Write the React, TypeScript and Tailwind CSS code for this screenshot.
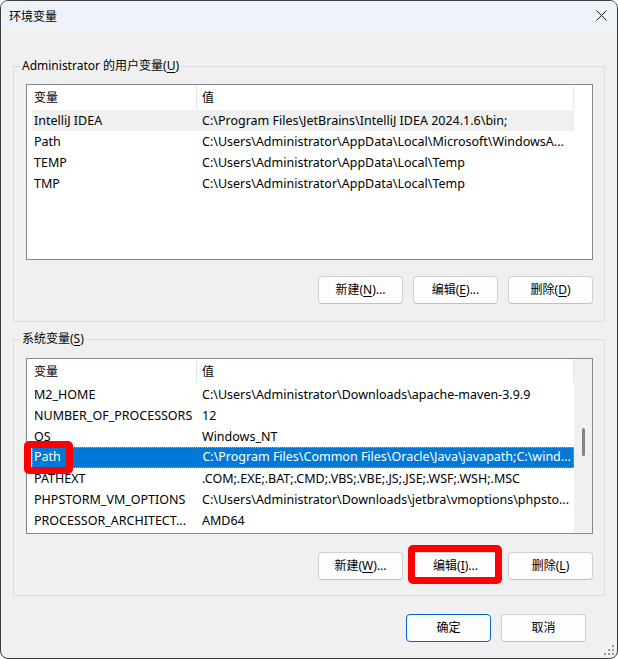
import React from 'react';

type Row = { name: string; value: string };

const userVars: Row[] = [
  { name: 'IntelliJ IDEA', value: 'C:\\Program Files\\JetBrains\\IntelliJ IDEA 2024.1.6\\bin;' },
  { name: 'Path', value: 'C:\\Users\\Administrator\\AppData\\Local\\Microsoft\\WindowsA...' },
  { name: 'TEMP', value: 'C:\\Users\\Administrator\\AppData\\Local\\Temp' },
  { name: 'TMP', value: 'C:\\Users\\Administrator\\AppData\\Local\\Temp' },
];

const sysVars: Row[] = [
  { name: 'M2_HOME', value: 'C:\\Users\\Administrator\\Downloads\\apache-maven-3.9.9' },
  { name: 'NUMBER_OF_PROCESSORS', value: '12' },
  { name: 'OS', value: 'Windows_NT' },
  { name: 'Path', value: 'C:\\Program Files\\Common Files\\Oracle\\Java\\javapath;C:\\wind...' },
  { name: 'PATHEXT', value: '.COM;.EXE;.BAT;.CMD;.VBS;.VBE;.JS;.JSE;.WSF;.WSH;.MSC' },
  { name: 'PHPSTORM_VM_OPTIONS', value: 'C:\\Users\\Administrator\\Downloads\\jetbra\\vmoptions\\phpsto...' },
  { name: 'PROCESSOR_ARCHITECT...', value: 'AMD64' },
];

function Btn({ label, hot, suffix = '', primary = false }: { label: string; hot?: string; suffix?: string; primary?: boolean }) {
  return (
    <button
      className={`w-[85px] h-[28px] rounded-[4px] border bg-[#fdfdfd] text-[12px] text-black flex items-center justify-center ${
        primary ? 'border-[#0067c0]' : 'border-[#d0d0d0] border-b-[#c0c0c0]'
      }`}
    >
      {label}
      {hot && (
        <>
          (<span className="underline underline-offset-2">{hot}</span>)
        </>
      )}
      {suffix}
    </button>
  );
}

function VarList({ rows, active, selected, scroll }: { rows: Row[]; active?: number; selected?: number; scroll?: boolean }) {
  return (
    <div className="h-[176px] border border-[#828790] bg-white flex">
      <div className="flex-1 pl-[5px]">
        {/* header */}
        <div className="h-[25px] flex text-[12px] text-black">
          <div className="w-[165px] pl-[2px] flex items-center border-r border-[#e5e5e5] my-[1px]">变量</div>
          <div className="w-[377px] pl-[5px] flex items-center border-r border-[#e5e5e5] my-[1px]">值</div>
        </div>
        {rows.map((r, i) => {
          const isSel = i === selected;
          const isActive = i === active;
          return (
            <div
              key={r.name + i}
              className={`h-[21px] w-[542px] flex text-[12.5px] whitespace-nowrap ${
                isSel
                  ? 'bg-[#0078d7] text-white border border-dotted border-[#e89a3c]'
                  : isActive
                  ? 'bg-[#f0f0f0] text-black'
                  : 'text-black'
              }`}
            >
              <div className={`w-[165px] flex items-center overflow-hidden ${isSel ? 'pl-[1px]' : 'pl-[2px] pt-[1px]'}`}>{r.name}</div>
              <div className={`w-[377px] pl-[5px] flex items-center overflow-hidden ${isSel ? '' : 'pt-[1px]'}`}>{r.value}</div>
            </div>
          );
        })}
      </div>
      {/* scrollbar area */}
      <div className={`w-[18px] relative ${scroll ? 'bg-[#f0f0f0]' : ''}`}>
        {scroll && <div className="absolute left-[8px] top-[69px] w-[3px] h-[28px] rounded-full bg-[#858585]" />}
      </div>
    </div>
  );
}

export default function App() {
  return (
    <div className="relative w-[618px] h-[659px] rounded-[8px] border border-[#3a3a3a] overflow-hidden bg-[#f0f0f0] flex flex-col font-['Noto_Sans','Noto_Sans_CJK_SC',sans-serif] text-[12px] text-black">
      {/* Title bar */}
      <div className="h-[29px] bg-[#eef2f9] flex items-center justify-between pl-[8px] pr-[9px] shrink-0">
        <span className="text-[12px] font-['Noto_Sans_CJK_SC',sans-serif]">环境变量</span>
        <svg width="11" height="11" viewBox="0 0 11 11" className="mr-[1px]">
          <path d="M0.5 0.5 L10.5 10.5 M10.5 0.5 L0.5 10.5" stroke="#1a1a1a" strokeWidth="1" fill="none" />
        </svg>
      </div>

      <div className="px-[12px] flex flex-col">
        {/* User variables */}
        <fieldset className="mt-[28px] border border-[#dcdcdc] p-0 m-0">
          <legend className="ml-[6px] px-[2px] leading-[16px] text-[12px]">
            Administrator 的用户变量(<span className="underline underline-offset-2">U</span>)
          </legend>
          <div className="pt-[10px] pl-[12px] pr-[11px] pb-[17px]">
            <VarList rows={userVars} active={0} />
            <div className="mt-[16px] flex justify-end gap-[10px]">
              <Btn label="新建" hot="N" suffix="..." />
              <Btn label="编辑" hot="E" suffix="..." />
              <Btn label="删除" hot="D" />
            </div>
          </div>
        </fieldset>

        {/* System variables */}
        <fieldset className="mt-[9px] border border-[#dcdcdc] p-0 m-0">
          <legend className="ml-[6px] px-[2px] leading-[16px] text-[12px]">
            系统变量(<span className="underline underline-offset-2">S</span>)
          </legend>
          <div className="pt-[11px] pl-[12px] pr-[11px] pb-[15px]">
            <VarList rows={sysVars} selected={3} scroll />
            <div className="mt-[18px] flex justify-end gap-[10px]">
              <Btn label="新建" hot="W" suffix="..." />
              <Btn label="编辑" hot="I" suffix="..." />
              <Btn label="删除" hot="L" />
            </div>
          </div>
        </fieldset>
      </div>

      {/* OK / Cancel */}
      <div className="mt-[18px] pr-[31px] flex justify-end gap-[10px]">
        <Btn label="确定" primary />
        <Btn label="取消" />
      </div>

      {/* resize grip */}
      <svg width="12" height="12" viewBox="0 0 12 12" className="absolute right-[2px] bottom-[2px]">
        <rect x="9" y="1" width="2" height="2" fill="#9a9a9a" />
        <rect x="9" y="5" width="2" height="2" fill="#9a9a9a" />
        <rect x="5" y="5" width="2" height="2" fill="#9a9a9a" />
        <rect x="9" y="9" width="2" height="2" fill="#9a9a9a" />
        <rect x="5" y="9" width="2" height="2" fill="#9a9a9a" />
        <rect x="1" y="9" width="2" height="2" fill="#9a9a9a" />
      </svg>

      {/* red annotation boxes */}
      <div className="absolute left-[23px] top-[440px] w-[49px] h-[33px] border-[7px] border-[#ff0000] rounded-[5px]" />
      <div className="absolute left-[407px] top-[544px] w-[94px] h-[39px] border-[7px] border-[#ff0000] rounded-[5px]" />
    </div>
  );
}
